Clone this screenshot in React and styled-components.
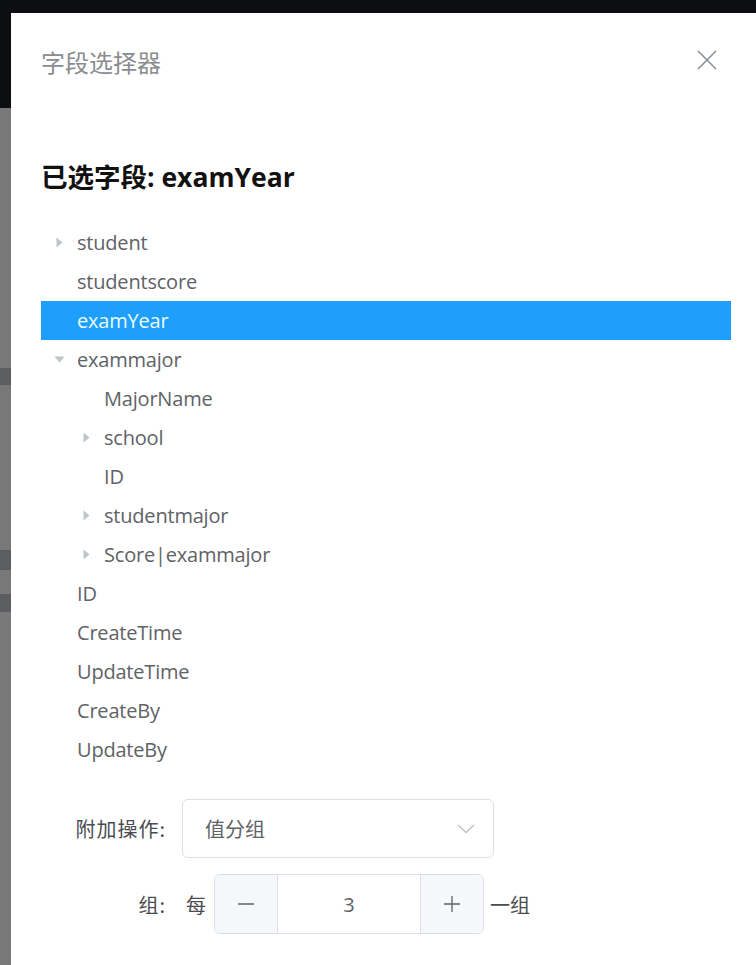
import React from 'react';
import styled, { createGlobalStyle } from 'styled-components';

const GlobalStyle = createGlobalStyle`
    html, body {
        margin: 0;
        padding: 0;
        background: #7a7a7a;
    }
    body {
        font-family: "Open Sans", "Noto Sans CJK SC", sans-serif;
        overflow: hidden;
    }
`;

const treeRows = [
    { label: 'student', level: 0, arrow: 'right' },
    { label: 'studentscore', level: 0 },
    { label: 'examYear', level: 0, selected: true },
    { label: 'exammajor', level: 0, arrow: 'down' },
    { label: 'MajorName', level: 1 },
    { label: 'school', level: 1, arrow: 'right' },
    { label: 'ID', level: 1 },
    { label: 'studentmajor', level: 1, arrow: 'right' },
    { label: 'Score|exammajor', level: 1, arrow: 'right' },
    { label: 'ID', level: 0 },
    { label: 'CreateTime', level: 0 },
    { label: 'UpdateTime', level: 0 },
    { label: 'CreateBy', level: 0 },
    { label: 'UpdateBy', level: 0 },
];

const Arrow = ({ dir }) => (
    <ArrowBox>
        {dir === 'right' && (
            <svg width="7" height="11" viewBox="0 0 7 11">
                <path d="M0.5 0.5 L6.5 5.5 L0.5 10.5 Z" fill="#c0c4cc" />
            </svg>
        )}
        {dir === 'down' && (
            <svg width="11" height="7" viewBox="0 0 11 7">
                <path d="M0.5 0.5 L10.5 0.5 L5.5 6.5 Z" fill="#c0c4cc" />
            </svg>
        )}
    </ArrowBox>
);

const App = () => {
    return (
        <>
            <GlobalStyle />
            <Backdrop>
                <BackHeader />
                <BackBand $top={368} $h={17} />
                <BackBand $top={550} $h={20} />
                <BackBand $top={594} $h={18} />

                <Dialog>
                    <DialogHeader>
                        <Title>字段选择器</Title>
                        <CloseBtn aria-label="close">
                            <svg width="20" height="20" viewBox="0 0 20 20">
                                <path d="M1 1 L19 19 M19 1 L1 19" stroke="#909399" strokeWidth="1.7" />
                            </svg>
                        </CloseBtn>
                    </DialogHeader>

                    <DialogBody>
                        <Heading>已选字段: examYear</Heading>

                        <Tree>
                            {treeRows.map((row, i) => (
                                <TreeRow key={i} $level={row.level} $selected={row.selected}>
                                    <Arrow dir={row.arrow} />
                                    <span>{row.label}</span>
                                </TreeRow>
                            ))}
                        </Tree>

                        <Form>
                            <FormItem>
                                <FormLabel>附加操作:</FormLabel>
                                <Select>
                                    <span>值分组</span>
                                    <svg width="18" height="10" viewBox="0 0 18 10">
                                        <path d="M1 1 L9 8.5 L17 1" stroke="#c0c4cc" strokeWidth="1.5" fill="none" />
                                    </svg>
                                </Select>
                            </FormItem>
                            <FormItem>
                                <FormLabel>组:</FormLabel>
                                <InlineText $pad="0 8px 0 4px">每</InlineText>
                                <NumberInput>
                                    <StepBtn $side="left">
                                        <svg width="18" height="18" viewBox="0 0 18 18">
                                            <path d="M1 9 L17 9" stroke="#606266" strokeWidth="1.3" />
                                        </svg>
                                    </StepBtn>
                                    <NumberValue>3</NumberValue>
                                    <StepBtn $side="right">
                                        <svg width="18" height="18" viewBox="0 0 18 18">
                                            <path d="M1 9 L17 9 M9 1 L9 17" stroke="#606266" strokeWidth="1.3" />
                                        </svg>
                                    </StepBtn>
                                </NumberInput>
                                <InlineText $pad="0 0 0 6px">一组</InlineText>
                            </FormItem>
                        </Form>
                    </DialogBody>
                </Dialog>
            </Backdrop>
        </>
    );
};

const Backdrop = styled.div`
    position: relative;
    width: 756px;
    height: 965px;
    background: #787878;
    overflow: hidden;
`;

const BackHeader = styled.div`
    height: 108px;
    background: #0c0e12;
`;

const BackBand = styled.div`
    position: absolute;
    left: 0;
    top: ${(p) => p.$top}px;
    width: 12px;
    height: ${(p) => p.$h}px;
    background: #5c5d61;
`;

const Dialog = styled.div`
    position: absolute;
    left: 11px;
    top: 13px;
    width: 780px;
    height: 1000px;
    background: #ffffff;
`;

const DialogHeader = styled.div`
    display: flex;
    align-items: center;
    justify-content: space-between;
    height: 104px;
    padding: 0 39px 0 30px;
    box-sizing: border-box;
    width: 745px;
`;

const Title = styled.div`
    font-family: "Noto Sans CJK SC", sans-serif;
    font-size: 24px;
    color: #8a8c90;
    line-height: 1;
    padding-bottom: 7px;
`;

const CloseBtn = styled.button`
    display: flex;
    align-items: center;
    justify-content: center;
    background: none;
    border: none;
    padding: 0;
    margin-bottom: 10px;
    cursor: pointer;
`;

const DialogBody = styled.div`
    padding: 0 25px 0 30px;
    width: 720px;
    box-sizing: content-box;
`;

const Heading = styled.h2`
    margin: 43px 0 0;
    font-family: "Open Sans", "Noto Sans CJK SC", sans-serif;
    font-size: 26.5px;
    font-weight: 700;
    color: #111;
    line-height: 34px;
`;

const Tree = styled.div`
    margin-top: 29px;
    width: 690px;
`;

const TreeRow = styled.div`
    display: flex;
    align-items: center;
    height: 39px;
    padding-left: ${(p) => p.$level * 27}px;
    background: ${(p) => (p.$selected ? '#1f9ffc' : 'transparent')};
    color: ${(p) => (p.$selected ? '#e8fdff' : '#606266')};
    font-size: 20px;
    letter-spacing: -0.2px;
    white-space: nowrap;
`;

const ArrowBox = styled.span`
    display: flex;
    align-items: center;
    justify-content: center;
    width: 24px;
    margin-left: 6px;
    margin-right: 6px;
`;

const Form = styled.div`
    margin-top: 30px;
    display: flex;
    flex-direction: column;
    gap: 16px;
`;

const FormItem = styled.div`
    display: flex;
    align-items: center;
    font-family: "Noto Sans CJK SC", sans-serif;
    font-size: 20px;
    color: #606266;
`;

const FormLabel = styled.label`
    width: 125px;
    padding-right: 16px;
    text-align: right;
    letter-spacing: 1px;
    color: #4a4c50;
    box-sizing: content-box;
`;

const Select = styled.div`
    display: flex;
    align-items: center;
    justify-content: space-between;
    width: 312px;
    height: 59px;
    box-sizing: border-box;
    border: 1px solid #dcdfe6;
    border-radius: 6px;
    padding: 0 18px 0 22px;
    color: #606266;
`;

const InlineText = styled.span`
    padding: ${(p) => p.$pad};
    color: #4a4c50;
`;

const NumberInput = styled.div`
    display: flex;
    width: 270px;
    height: 60px;
    box-sizing: border-box;
    border: 1px solid #dcdfe6;
    border-radius: 6px;
    overflow: hidden;
`;

const StepBtn = styled.div`
    display: flex;
    align-items: center;
    justify-content: center;
    width: 62px;
    background: #f5f7fa;
    border-left: ${(p) => (p.$side === 'right' ? '1px solid #dcdfe6' : 'none')};
    border-right: ${(p) => (p.$side === 'left' ? '1px solid #dcdfe6' : 'none')};
`;

const NumberValue = styled.div`
    flex: 1;
    display: flex;
    align-items: center;
    justify-content: center;
    font-family: "Open Sans", sans-serif;
    font-size: 20px;
    color: #606266;
`;

export default App;
